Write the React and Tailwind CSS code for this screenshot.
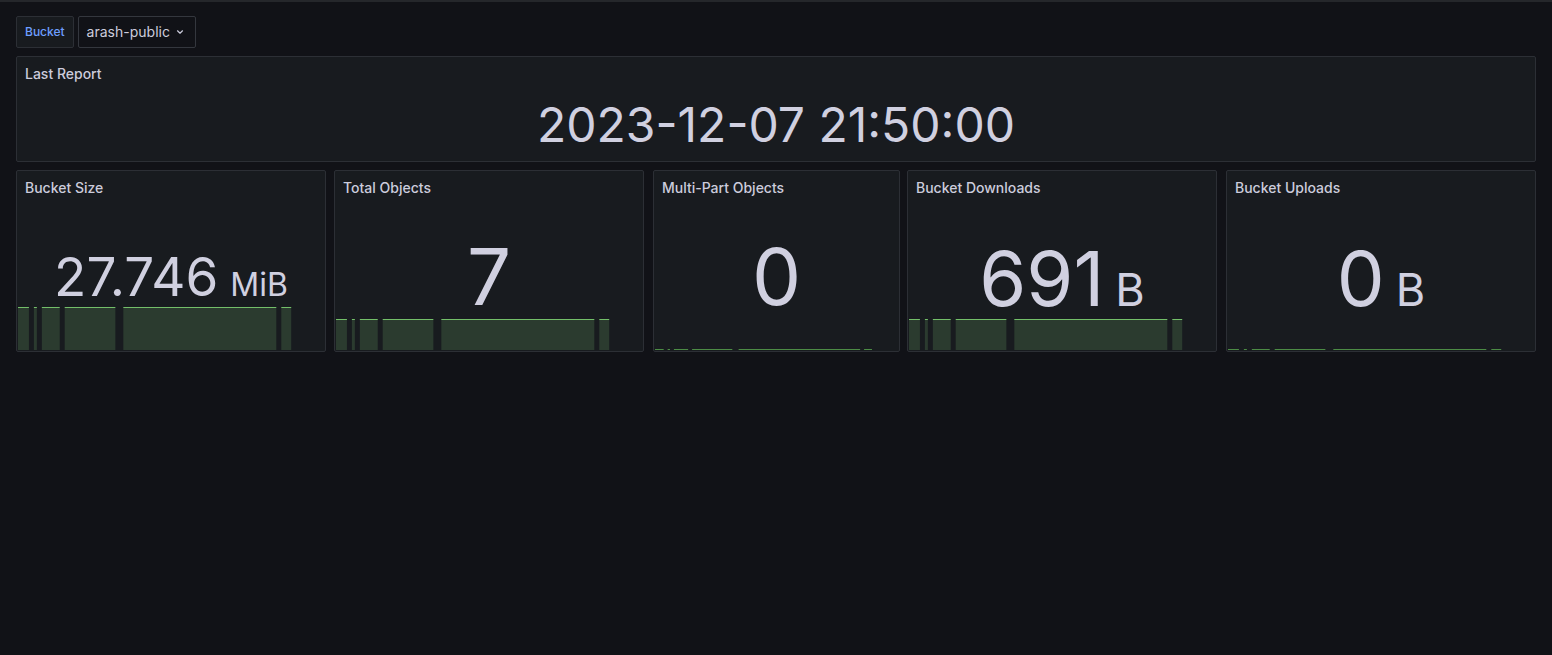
import React from 'react';

// segment spans on a 308px wide sparkline (scaled for narrower panels)
const SEGS = [
  [0, 11],
  [16, 19],
  [24, 42],
  [47, 98],
  [106, 260],
  [265, 275],
];

const Sparkline = ({ top }) => {
  const flat = top >= 42;
  return (
    <svg
      className="absolute left-px bottom-px w-[calc(100%-2px)] h-[43px]"
      viewBox="0 0 308 43"
      preserveAspectRatio="none"
    >
      {SEGS.map(([a, b], i) => (
        <g key={i}>
          {!flat && <rect x={a} y={top + 1} width={b - a} height={43 - top - 1} fill="#2b3b2f" />}
          <rect x={a} y={flat ? 42 : top} width={b - a} height="1" fill={flat ? '#4c8c45' : '#73bf69'} />
        </g>
      ))}
    </svg>
  );
};

const StatPanel = ({ title, value, unit, size, unitSize, unitGap, offset, chartTop, className }) => (
  <div className={`relative h-[182px] shrink-0 border border-[#2c2f35] bg-[#181b1f] rounded-[2px] ${className}`}>
    <Sparkline top={chartTop} />
    <div className="relative h-8 pt-[2px] px-2 flex items-center text-sm font-medium text-[#ccccdc]">{title}</div>
    <div
      className="relative text-center leading-none text-[#d0d0e0] whitespace-nowrap"
      style={{ fontSize: size, marginTop: offset }}
    >
      <span>{value}</span>
      {unit && (
        <span style={{ fontSize: unitSize, marginLeft: unitGap }}>
          {unit}
        </span>
      )}
    </div>
  </div>
);

const App = () => {
  return (
    <div
      className="min-h-[655px] bg-[#111217] border-t-2 border-[#25272b] px-4 pt-[14px]"
      style={{ fontFamily: 'Inter, "Noto Sans", sans-serif' }}
    >
      {/* Variables */}
      <div className="flex items-center h-8">
        <div className="h-8 px-2 flex items-center border border-[#2c2f35] bg-[#181b1f] rounded-[2px] text-xs font-medium text-[#6e9fff]">
          Bucket
        </div>
        <div className="ml-1 h-8 w-[118px] pl-[8px] flex items-center border border-[#34373e] bg-[#111217] rounded-[2px] text-sm text-[#ccccdc]">
          arash-public
          <svg className="ml-[6px]" width="8" height="6" viewBox="0 0 8 6" fill="none">
            <path d="M1.5 1.8 L4 4.2 L6.5 1.8" stroke="#ccccdc" strokeWidth="1.2" strokeLinecap="round" strokeLinejoin="round" />
          </svg>
        </div>
      </div>

      {/* Last report */}
      <div className="mt-2 h-[106px] border border-[#2c2f35] bg-[#181b1f] rounded-[2px]">
        <div className="h-8 pt-[2px] px-2 flex items-center text-sm font-medium text-[#ccccdc]">Last Report</div>
        <div className="mt-[12px] text-center text-[48px] leading-none text-[#d0d0e0]">2023-12-07 21:50:00</div>
      </div>

      {/* Stats */}
      <div className="mt-2 flex">
        <StatPanel title="Bucket Size" value="27.746" unit="MiB" size={53} unitSize={32} unitGap={12} offset={48} chartTop={0} className="w-[310px]" />
        <StatPanel title="Total Objects" value="7" size={78} offset={35} chartTop={12} className="w-[310px] ml-2" />
        <StatPanel title="Multi-Part Objects" value="0" size={78} offset={35} chartTop={42} className="w-[247px] ml-[9px]" />
        <StatPanel title="Bucket Downloads" value="691" unit="B" size={76} unitSize={45} unitGap={11} offset={37} chartTop={12} className="w-[310px] ml-[7px]" />
        <StatPanel title="Bucket Uploads" value="0" unit="B" size={76} unitSize={45} unitGap={11} offset={37} chartTop={42} className="w-[310px] ml-[9px]" />
      </div>
    </div>
  );
};

export default App;
